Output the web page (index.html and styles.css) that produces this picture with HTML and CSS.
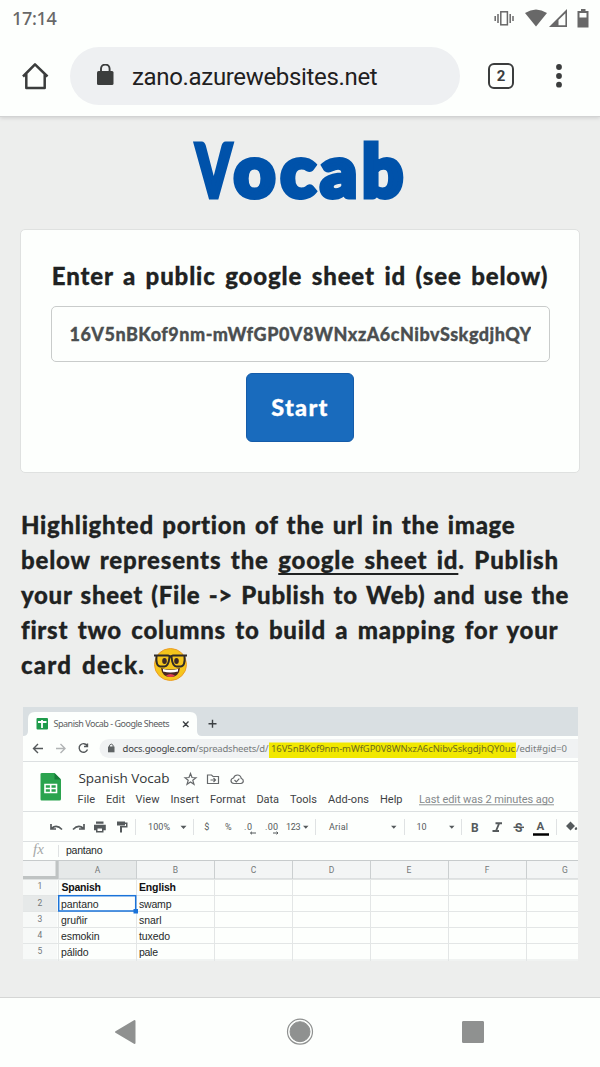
FILE: index.html
```html
<!DOCTYPE html>
<html lang="en">
<head>
<meta charset="utf-8">
<title>Vocab</title>
<link rel="stylesheet" href="styles.css">
</head>
<body>
<header class="chrome">
  <div class="status">
    <span class="clock">17:14</span>
    <svg class="status-icons" width="96" height="22" viewBox="493 7 96 22" fill="#686868">
      <g fill="none" stroke="#686868" stroke-width="1.5"><rect x="500.8" y="10.8" width="6.600" height="13"/><path d="M498 13v9M495.2 15v5M510.2 13v9M513 15v5"/></g>
      <path d="M525 12q11-7 22 0L536 25.500z"/>
      <path fill-rule="evenodd" d="M549 26L567 8v18zM558.500 19v5.200h6.900V12.200z"/>
      <path fill-rule="evenodd" d="M579 10h2V8h4.500v2h3v16.500H577.500V10zM579.500 12v4.500h7V12z"/>
    </svg>
  </div>
  <div class="toolbar">
    <svg class="home" width="28" height="28" viewBox="21 62 28 28" fill="none" stroke="#3b3d3d" stroke-width="2.500" stroke-linejoin="round"><path d="M23 76.500L35 64.300L47.500 76.500M26.300 74v14h18.400V74"/></svg>
    <div class="address">
      <svg width="18" height="22" viewBox="96 65 18 22"><rect x="97" y="72" width="16.500" height="14" rx="1.500" fill="#3b3d3d"/><path d="M101 73v-3.200a4.300 4.300 0 0 1 8.600 0V73" fill="none" stroke="#3b3d3d" stroke-width="1.900"/></svg>
      <span class="host">zano.azurewebsites.net</span>
    </div>
    <div class="tabs">2</div>
    <svg class="more" width="8" height="26" viewBox="555 63 8 26" fill="#3b3d3d"><circle cx="559" cy="67" r="2.900"/><circle cx="559" cy="76" r="2.900"/><circle cx="559" cy="84.700" r="2.900"/></svg>
  </div>
</header>
<main class="page">
  <h1 class="title"><span class="initial">V</span>ocab</h1>
  <section class="card">
    <label class="label">Enter a public google sheet id (see below)</label>
    <div class="field"><span class="value">16V5nBKof9nm-mWfGP0V8WNxzA6cNibvSskgdjhQY</span></div>
    <button class="start">Start</button>
  </section>
  <p class="help">
    <span class="line line-a">Highlighted portion of the url in the image</span>
    <span class="line line-b">below represents the <u>google sheet id</u>. Publish</span>
    <span class="line line-c">your sheet (File -&gt; Publish to Web) and use the</span>
    <span class="line line-d">first two columns to build a mapping for your</span>
    <span class="line line-e">card deck. <svg class="nerd" width="35" height="35" viewBox="0 0 35 35"><circle cx="17.500" cy="17.500" r="16" fill="#f5c51c" stroke="#ec9b27"/><path d="M8 21q9.500 3 19 0q-1 9-9.500 9T8 21z" fill="#4a2921"/><path d="M10 22q7.500 2 15 0v2.500q-7.500 2-15 0z" fill="#fff"/><path d="M13 28.500q4.500-3 9 0-4.500 3-9 0z" fill="#e33c51"/><ellipse cx="11.500" cy="14" rx="2.300" ry="3" fill="#3c2925"/><ellipse cx="23.500" cy="14" rx="2.300" ry="3" fill="#3c2925"/><path d="M1 8.500h14l2.500 1 2.500-1h14M3.500 8.500q-1 11 4 11h4q4 0 5-9.500M31.500 8.500q1 11-4 11h-4q-4 0-5-9.500" fill="none" stroke="#302b28" stroke-width="2"/></svg></span>
  </p>
  <svg class="sheet" width="555" height="254" viewBox="23 707 555 254">
    <rect x="23" y="707" width="555" height="254" fill="#fdfffd"/>
    <rect x="23" y="707" width="555" height="29" fill="#d9dfe2"/>
    <path d="M23 736q5 0 5-5V719q0-7 7-7H190q7 0 7 7v12q0 5 5 5z" fill="#fdfffd"/>
    <rect x="36.500" y="718" width="11.500" height="11.500" rx="1" fill="#1e9b4b"/><path d="M38 722h8.500M42 720v8" stroke="#fff" stroke-width="1.800"/>
    <g class="ui">
      <text x="53.500" y="727.300" textLength="116" font-size="9" fill="#5c6062">Spanish Vocab - Google Sheets</text>
      <path d="M183 721.500l5.500 5.500M188.500 721.500l-5.500 5.500M208.500 723.800h8M212.500 719.800v8" stroke="#3c4043" stroke-width="1.400"/>
      <g fill="none" stroke="#55595b" stroke-width="1.400"><path d="M43 748.500H33.500M38 744l-4.500 4.500 4.500 4.500"/><path d="M56 748.500h9M60.500 744l4.500 4.500-4.500 4.500" stroke="#b1b4b5"/><path d="M87 745.500a4.300 4.300 0 1 0 .5 4M87.500 743.500v3h-3.500"/></g>
      <path d="M578 739H109a9.500 9.500 0 0 0 0 19H578z" fill="#f0f2f3"/>
      <rect x="108" y="746.500" width="6.500" height="5.800" fill="#5f6365"/><path d="M109.500 747v-1.800q1.800-2.200 3.600 0v1.800" fill="none" stroke="#5f6365"/>
      <text x="122.500" y="752.300" textLength="146" font-size="9.500" fill="#777b7c"><tspan fill="#3f4345">docs.google.com</tspan>/spreadsheets/d/</text>
      <rect x="269" y="742.500" width="247" height="15.500" fill="#f1e800"/>
      <text x="271" y="752.300" textLength="244" font-size="9.500" fill="#6e6c1c">16V5nBKof9nm-mWfGP0V8WNxzA6cNibvSskgdjhQY0uc</text>
      <text x="516" y="752.300" textLength="51" font-size="9.500" fill="#777b7c">/edit#gid=0</text>
    </g>
    <path d="M23 761.500H578M23 811.500H578M23 841.500H578" stroke="#dce0e1"/>
    <path d="M42 773h12.500l6.500 6.500v19.500q0 1.500-1.500 1.500h-18q-1 0-1-1.500V774q0-1 1.500-1z" fill="#2aa34e"/><path d="M54.500 773v6.500H61z" fill="#167c38"/>
    <path d="M45 784.500h11.500v8H45zM45 788.500h11.500M50.700 784.500v8" fill="none" stroke="#fff" stroke-width="1.600"/>
    <text class="doc" x="78.500" y="782.700" textLength="91" font-size="13.500" fill="#323537">Spanish Vocab</text>
    <g fill="none" stroke="#66696b" stroke-width="1.200"><path d="M190.500 773.500l1.500 4 4 .2-3.200 2.600 1.200 4-3.500-2.300-3.500 2.300 1.200-4-3.200-2.600 4-.2z"/><path d="M207.500 775h4l1.500 1.500h5.500v7h-11zM210.500 780h5M213.500 778l2 2-2 2"/><path d="M234 783.500q-3-.2-3-2.700 0-2.300 2.500-2.800 1-3 4-3t3.800 3.500q2 .5 2 2.500t-2.500 2.500zM234.500 780l1.800 1.800 3-3.200"/></g>
    <g class="menu">
      <text x="77.500" y="803.400" textLength="17.500">File</text><text x="106" y="803.400" textLength="19">Edit</text><text x="135.500" y="803.400" textLength="24">View</text><text x="170.500" y="803.400" textLength="28.500">Insert</text><text x="210" y="803.400" textLength="35.500">Format</text><text x="256.500" y="803.400" textLength="22.500">Data</text><text x="290" y="803.400" textLength="27">Tools</text><text x="328" y="803.400" textLength="41">Add-ons</text><text x="380" y="803.400" textLength="22.500">Help</text>
      <text x="419" y="803.400" textLength="135" fill="#85898b">Last edit was 2 minutes ago</text>
    </g>
    <path d="M419 804.800H554" stroke="#85898b" stroke-width=".9"/>
    <g fill="none" stroke="#555a5c" stroke-width="1.700"><path d="M51 824v5h5M51.500 828.500q5-4.500 10.500 1M84 824v5h-5M83.500 828.500q-5-4.500-10.500 1"/></g>
    <g fill="#555a5c"><path d="M96 821.500h7.500v2.300H96zM94 824.800h11.800v5.400h-2.300v2.300H96v-2.300h-2zM117 821.500h8v4h-8zM125 822.500h2.500v5H122v5h-2v-6.500h6v-2h-1z"/><path d="M97.500 828.500h4.500v2.500h-4.500z" fill="#fff"/>
      <path d="M180.500 825.700h6l-3 3.300zM303 825.700h5.500l-2.700 3.100zM391 825.700h5.500l-2.700 3.100zM449 825.700h5.500l-2.700 3.100zM566 826l4.500-4.500 4.500 4.500-4.500 4.500zM574.500 829q2-4 2.800 0-1.400 2-2.800 0z"/></g>
    <path d="M135.500 819v16M193.500 819v16M315.500 819v16M404.500 819v16M461.500 819v16M556.500 819v16" stroke="#dfe2e3"/>
    <g class="tools">
      <text x="148" y="829.700" textLength="22">100%</text><text x="204.300" y="830">$</text><text x="225" y="830" textLength="7">%</text><text x="244" y="830" textLength="8">.0</text><text x="265" y="830" textLength="13">.00</text><text x="286" y="830" textLength="14.500">123</text><text x="329" y="830" textLength="19">Arial</text><text x="416.500" y="829.700" textLength="10">10</text>
      <g font-size="12" font-weight="bold"><text x="471" y="831.500">B</text><text x="515" y="831.500">S</text><text x="536.500" y="830" font-size="11.500">A</text></g>
    </g>
    <path d="M495.500 823.300h6.500M492.500 831h6.500M499.300 823l-3.300 8" fill="none" stroke="#555a5c" stroke-width="1.900"/>
    <path d="M513.500 827.300h10.500" stroke="#555a5c" stroke-width="1.500"/><path d="M533 834.500h16" stroke="#000" stroke-width="2.500"/><path d="M256 833h-5.500l1.500-1.300M250.500 833l1.500 1.300M273 833h5l-1.500-1.300M278 833l-1.500 1.300" fill="none" stroke="#555a5c"/>
    <text x="33" y="854" font-size="15" font-style="italic" class="serif" fill="#a5a8a8">fx</text><path d="M58.500 845v12" stroke="#dfe2e3"/>
    <text class="cell" x="66" y="854" textLength="36.500" fill="#404345">pantano</text>
    <path d="M23 861h555v18H23z" fill="#f3f5f5"/><path d="M58 861h78v18H58z" fill="#e6e9e9"/><path d="M23 879h34v82H23z" fill="#f7f9f8"/><path d="M23 896h34v16H23z" fill="#e6e9e9"/>
    <path d="M23 860.500H578M23 879H578" stroke="#c7cbcc"/><path d="M23 877.500h34V861" fill="none" stroke="#bfc3c3" stroke-width="3"/>
    <path d="M58.500 861v18M136.500 861v18M214.500 861v18M292.500 861v18M370.500 861v18M448.500 861v18M526.500 861v18" stroke="#cbcfd0"/>
    <path d="M58.500 879v82M136.500 879v82M214.500 879v82M292.500 879v82M370.500 879v82M448.500 879v82M526.500 879v82M23 895.500H578M23 911.500H578M23 927.500H578M23 943.500H578M23 960H578" stroke="#e3e6e6"/>
    <g class="heads"><text x="97.500" y="873">A</text><text x="175.500" y="873">B</text><text x="253.500" y="873">C</text><text x="331.500" y="873">D</text><text x="409" y="873">E</text><text x="487" y="873">F</text><text x="565" y="873">G</text><text x="40" y="889">1</text><text x="40" y="905.500">2</text><text x="40" y="921.500">3</text><text x="40" y="937.500">4</text><text x="40" y="953.700">5</text></g>
    <g class="cell"><g font-weight="bold" fill="#111"><text x="61.500" y="891" textLength="39.500">Spanish</text><text x="139" y="891" textLength="37">English</text></g><text x="61" y="907.500" textLength="37.500">pantano</text><text x="139" y="907.500" textLength="32.500">swamp</text><text x="61" y="923.500" textLength="26.500">gruñir</text><text x="139" y="923.500" textLength="22.500">snarl</text><text x="61" y="939.800" textLength="38.500">esmokin</text><text x="139" y="939.800" textLength="31">tuxedo</text><text x="61" y="956" textLength="27.500">pálido</text><text x="139" y="956" textLength="19">pale</text></g>
    <rect x="58.700" y="895.700" width="77" height="15.300" fill="none" stroke="#1a73d9" stroke-width="1.500"/><rect x="133.500" y="909" width="4.500" height="4.500" fill="#1a73d9"/>
  </svg>
</main>
<nav class="nav">
  <svg width="600" height="69" viewBox="0 998 600 69" fill="#8f9190" stroke="#8f9190" stroke-linejoin="round"><path d="M116 1032l18.500-11v22z" stroke-width="2"/><circle cx="300" cy="1031.700" r="10"/><circle cx="300" cy="1031.700" r="12.500" fill="none" stroke-width="1.200"/><rect x="462.500" y="1021.500" width="21" height="21" rx=".5"/></svg>
</nav>
</body>
</html>
```
FILE: styles.css
```css
* { box-sizing: border-box; }
body { margin: 0; width: 600px; height: 1067px; display: flex; flex-direction: column; overflow: hidden; background: #edeeed; }
svg { display: block; flex: none; }
.chrome { flex: none; height: 117px; background: #fdfffd; border-bottom: 1px solid #d2d3d3; box-shadow: 0 1px 4px #0002; font-family: Roboto, sans-serif; }
.status { height: 37px; padding: 0 11px 0 12px; display: flex; align-items: center; justify-content: space-between; }
.clock { font: 500 18px/22px "Noto Sans", sans-serif; color: #686868; letter-spacing: -.3px; margin-top: -2px; }
.toolbar { height: 78px; display: flex; align-items: center; padding: 0 37px 0 21px; }
.address { width: 390px; height: 58px; margin-left: 21px; padding-left: 26px; border-radius: 29px; background: #eef0f2; display: flex; align-items: center; gap: 18px; }
.address svg { margin-top: -3px; }
.host { font-size: 24px; letter-spacing: -.33px; margin-top: 2px; color: #1f2021; white-space: nowrap; }
.tabs { width: 26px; height: 26px; margin-left: 28px; border: 2.500px solid #3b3d3d; border-radius: 6px; font: bold 15px/22px Roboto, sans-serif; text-align: center; color: #3b3d3d; }
.more { margin-left: 41px; }
.page { flex: none; height: 880px; padding: 0 20px; font-family: Lato, sans-serif; font-weight: 900; color: #202222; }
.title { height: 112px; margin: 0; padding-left: 4px; font-size: 72px; line-height: 105px; letter-spacing: 5px; text-align: center; color: #0052aa; font-weight: 900; -webkit-text-stroke: 5px #0052aa; stroke-linejoin: round; }
.initial { display: inline-block; width: 38px; transform: scaleX(.7); transform-origin: left; }
.card { height: 244px; margin: 0; padding: 28px 30px; border: 1px solid #dfe1e0; border-radius: 5px; background: #fdfffd; display: flex; flex-direction: column; align-items: center; }
.label { height: 35px; font-size: 24px; line-height: 35px; letter-spacing: .85px; word-spacing: 3px; white-space: nowrap; -webkit-text-stroke: .3px; }
.field { width: 499px; height: 56px; margin-top: 13px; padding: 0 18px; border: 1px solid #c9cccb; border-radius: 5px; }
.value { display: block; overflow: hidden; font-size: 18px; line-height: 54px; letter-spacing: .49px; color: #4b4f50; white-space: nowrap; -webkit-text-stroke: .3px; }
.start { width: 108px; height: 69px; margin-top: 11px; padding: 0 0 2px; border: 1px solid #155ca9; border-radius: 6px; background: #196bbd; color: #fff; font: 900 23.500px Lato, sans-serif; letter-spacing: 1.300px; -webkit-text-stroke: .3px; }
.help { margin: 34px 0 0 1px; font-size: 24px; line-height: 35px; -webkit-text-stroke: .3px; }
.line { display: block; height: 35px; width: max-content; white-space: nowrap; }
.line-a { letter-spacing: .71px; word-spacing: 2px; }
.line-b { letter-spacing: .8px; word-spacing: 3px; }
.line-c { letter-spacing: .7px; word-spacing: 2px; }
.line-d { letter-spacing: .72px; word-spacing: 3px; }
.line-e { display: flex; gap: 8px; letter-spacing: 1.200px; word-spacing: 3px; }
.help u { text-decoration-thickness: 2px; text-underline-offset: 4px; }
.sheet { margin: 25px 0 0 3px; font-weight: 400; -webkit-text-stroke: 0; }
.ui { font-family: "Noto Sans", sans-serif; }
.doc { font-family: "Open Sans", sans-serif; }
.menu { font: 11px Roboto, sans-serif; fill: #3e4244; }
.tools { font: 9px Roboto, sans-serif; fill: #555a5c; }
.serif { font-family: "Liberation Serif", serif; }
.heads { font: 8.500px Roboto, sans-serif; fill: #737778; text-anchor: middle; }
.cell { font-family: "Liberation Sans", Arial, sans-serif; font-size: 10.500px; fill: #262929; }
.nav { flex: none; height: 70px; border-top: 1px solid #d5d6d5; background: #fdfffd; }
```
